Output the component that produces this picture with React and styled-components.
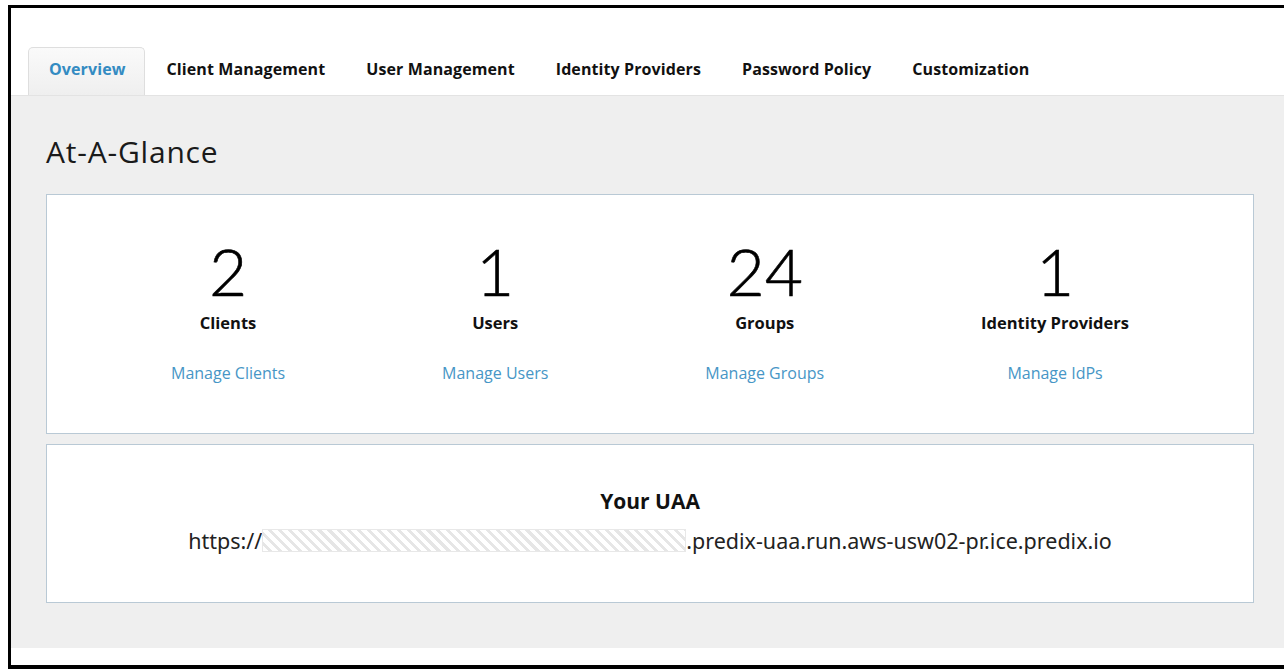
import React from 'react';
import styled, { createGlobalStyle } from 'styled-components';

const GlobalStyle = createGlobalStyle`
    html, body {
        margin: 0;
        padding: 0;
        background: #ffffff;
    }
    body {
        font-family: "Open Sans", "Noto Sans", sans-serif;
        color: #1a1a1a;
    }
`;

const Frame = styled.div`
    margin: 5px 0 0 8px;
    height: 657px;
    border: 3px solid #000;
    border-bottom-width: 4px;
    border-right: none;
    display: flex;
    flex-direction: column;
    background: #fff;
    overflow: hidden;
`;

const TabBar = styled.nav`
    display: flex;
    align-items: flex-end;
    padding: 39px 0 0 17px;
    height: 48px;
`;

const Tab = styled.a`
    display: flex;
    align-items: center;
    height: 100%;
    box-sizing: border-box;
    padding: 0 18px 5px 20px;
    margin-right: 1px;
    font-size: 16px;
    font-weight: 700;
    letter-spacing: 0.1px;
    text-decoration: none;
    cursor: pointer;
    color: ${p => (p.$active ? '#338bc2' : '#111')};
    background: ${p => (p.$active ? 'linear-gradient(#fafafa, #efefef)' : 'transparent')};
    border: 1px solid ${p => (p.$active ? '#dedede' : 'transparent')};
    border-bottom: none;
    border-radius: 5px 5px 0 0;
`;

const Panel = styled.main`
    flex: 0 0 auto;
    background: #efefef;
    border-top: 1px solid #e3e3e3;
    padding: 0 30px 45px 35px;
`;

const Heading = styled.h1`
    margin: 0;
    height: 98px;
    box-sizing: border-box;
    padding-top: 12px;
    display: flex;
    align-items: center;
    font-size: 30px;
    font-weight: 400;
    letter-spacing: 0.8px;
    color: #1a1a1a;
`;

const Card = styled.section`
    background: #fff;
    border: 1px solid #b9c9d5;
    box-sizing: border-box;
    height: ${p => p.$height}px;
    & + & {
        margin-top: 10px;
    }
`;

const StatsRow = styled.div`
    display: flex;
    justify-content: space-between;
    padding: 43px 124px 0 124px;
`;

const Stat = styled.div`
    display: flex;
    flex-direction: column;
    align-items: center;
`;

const Count = styled.div`
    font-family: "Lato", "DejaVu Sans", sans-serif;
    font-weight: 300;
    font-size: 66px;
    line-height: 66px;
    color: #000;
    -webkit-text-stroke: 0.6px #000;
`;

const Label = styled.div`
    margin-top: 7px;
    font-size: 16.5px;
    font-weight: 700;
    color: #111;
`;

const ManageLink = styled.a`
    margin-top: 28px;
    font-size: 16px;
    color: #4796c6;
    text-decoration: none;
    cursor: pointer;
`;

const UaaBody = styled.div`
    display: flex;
    flex-direction: column;
    align-items: center;
    padding-top: 42px;
`;

const UaaTitle = styled.div`
    font-size: 21px;
    font-weight: 700;
    color: #111;
`;

const UrlLine = styled.div`
    display: flex;
    align-items: center;
    margin-top: 11px;
    font-family: "Noto Sans", "Open Sans", sans-serif;
    font-size: 21.5px;
    color: #222;
`;

const Redacted = styled.span`
    display: inline-block;
    width: 424px;
    height: 23px;
    box-sizing: border-box;
    border: 1px solid #e8e8e8;
    background: repeating-linear-gradient(
        45deg,
        #ffffff 0px,
        #ffffff 4px,
        #e6e6e6 4px,
        #e6e6e6 7px
    );
`;

const BottomGap = styled.div`
    flex: 1;
    background: #fff;
`;

const tabs = [
    'Overview',
    'Client Management',
    'User Management',
    'Identity Providers',
    'Password Policy',
    'Customization',
];

const stats = [
    { count: 2, label: 'Clients', link: 'Manage Clients' },
    { count: 1, label: 'Users', link: 'Manage Users' },
    { count: 24, label: 'Groups', link: 'Manage Groups' },
    { count: 1, label: 'Identity Providers', link: 'Manage IdPs' },
];

const App = () => {
    return (
        <>
            <GlobalStyle />
            <Frame>
                <TabBar>
                    {tabs.map((t, i) => (
                        <Tab key={t} $active={i === 0}>{t}</Tab>
                    ))}
                </TabBar>
                <Panel>
                    <Heading>At-A-Glance</Heading>
                    <Card $height={240}>
                        <StatsRow>
                            {stats.map(s => (
                                <Stat key={s.label}>
                                    <Count>{s.count}</Count>
                                    <Label>{s.label}</Label>
                                    <ManageLink>{s.link}</ManageLink>
                                </Stat>
                            ))}
                        </StatsRow>
                    </Card>
                    <Card $height={159}>
                        <UaaBody>
                            <UaaTitle>Your UAA</UaaTitle>
                            <UrlLine>
                                https://<Redacted />.predix-uaa.run.aws-usw02-pr.ice.predix.io
                            </UrlLine>
                        </UaaBody>
                    </Card>
                </Panel>
                <BottomGap />
            </Frame>
        </>
    );
};

export default App;
